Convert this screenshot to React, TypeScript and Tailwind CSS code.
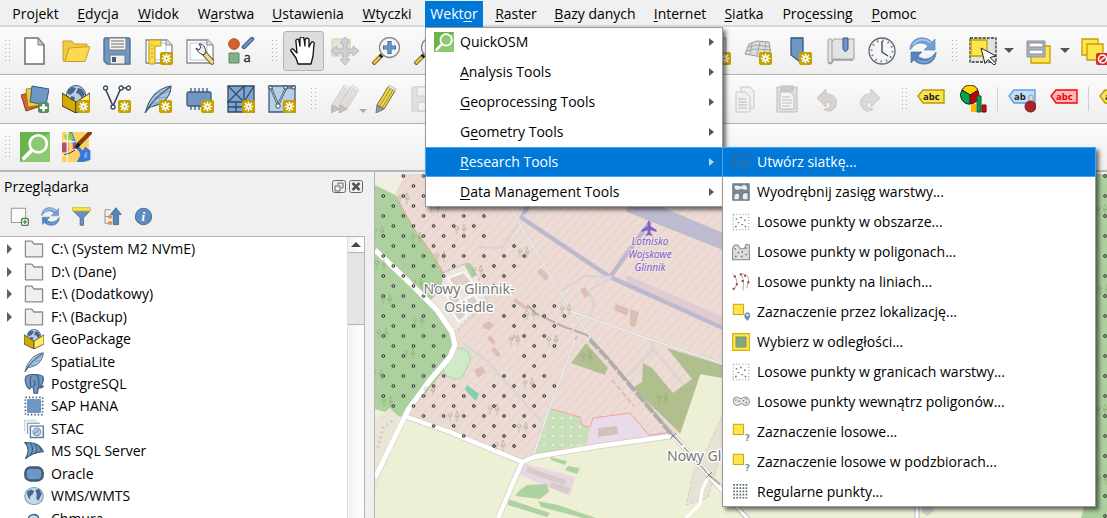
import React, { type ReactNode } from "react";

const NAVY = "#415a75";
const BLUE = "#6d97c4";

function Svg({ size = 28, children }: { size?: number; children: ReactNode }) {
  return (
    <svg width={size} height={size} viewBox="0 0 28 28" fill="none" className="block shrink-0" aria-hidden="true">
      {children}
    </svg>
  );
}

function Star({ x = 15, y = 15 }: { x?: number; y?: number }) {
  return (
    <g transform={`translate(${x} ${y})`}>
      <rect width="13" height="13" rx="2" fill="#c4a000" />
      <path d="M6.5 1.8v9.4M1.8 6.5h9.4M3 3l7 7M10 3l-7 7" stroke="#fff" strokeWidth="1.7" />
      <circle cx="6.5" cy="6.5" r="1" fill="#c4a000" />
    </g>
  );
}

function Plus() {
  return (
    <g transform="translate(17 17)">
      <rect width="11" height="11" rx="2.5" fill="#5a8c5a" />
      <path d="M5.500 2v7.500M1.800 5.700h7.500" stroke="#fff" strokeWidth="2.400" />
    </g>
  );
}

const Refresh = () => (
  <>
    <path d="M1 13C1 4 8 0 15 1c4 .5 6 2 8 4l3-3v11H15l4-4C14 4 6 5 1 13z" fill="#6f9fd4" stroke="#5b86b8" strokeWidth=".7" />
    <path d="M4 8C8 2 16 1 22 6" stroke="#a9c8e8" strokeWidth="1.6" />
    <path d="M27 15c0 9-7 13-14 12-4-.5-6-2-8-4l-3 3V15h11l-4 4c5 5 13 4 18-4z" fill="#5585bf" stroke="#4b77ab" strokeWidth=".7" />
    <path d="M24 20c-4 6-11 6-15 3" stroke="#8bb3dd" strokeWidth="1.3" />
  </>
);

const Feather = ({ star = false }: { star?: boolean }) => (
  <>
    <path d="M2 26c1-6 4-11 8-16C15 5 20 2 27 1c0 6-3 12-8 16-4 3-9 4-13 5z" fill="#a9c4e2" stroke={NAVY} strokeWidth="1.1" />
    <path d="M1 28C7 17 16 9 26 2" stroke={NAVY} strokeWidth="1.500" />
    <path d="M10 17l1-5m4 0l1-5m4 1l1-4M10 19l7-2m-3-4l8-1m-4-3l7-3" stroke="#7391b1" strokeWidth=".8" />
    {star && <Star />}
  </>
);

const Box = ({ star = false }: { star?: boolean }) => (
  <>
    <circle cx="14" cy="10" r="9.5" fill="#b9cde3" stroke={NAVY} />
    <path d="M6 5l4-3 4 1-2 4-4 3-3-2zM16 3l4 1 3 5-3 4-3-4-3-1zM9 11l4 1-1 4-3-1z" fill="#45688c" />
    <path d="M0 8l14 9v11L0 21z" fill="#d4aa00" stroke="#333" />
    <path d="M28 8l-14 9v11l14-7z" fill="#ffee55" stroke="#333" />
    {star && <Star />}
  </>
);

const Pencil = ({ x = 0, fill = "#ead94a", edge = "#756b25" }: { x?: number; fill?: string; edge?: string }) => (
  <g transform={`translate(${x} 0)`}>
    <path d="M16 2l7 4-11 18-7-4z" fill={fill} stroke={edge} />
    <path d="M18.5 3.5L7.5 21.5M21 5L10 23" stroke={edge} strokeWidth=".7" />
    <path d="M16 2l1-2 7 4-1 2z" fill="#ececec" stroke="#bbb" />
    <path d="M5 20l7 4-8 4z" fill="#999" stroke="#777" />
  </g>
);

const Magnifier = ({ minus = false }: { minus?: boolean }) => (
  <>
    <path d="M10 18l-9 9" stroke="#222" strokeWidth="4" />
    <path d="M8 20l-6.5 6.5" stroke="#f2c12e" strokeWidth="3" />
    <circle cx="17.500" cy="10.500" r="10" fill="#f4f4f4" stroke="#888" strokeWidth="1.3" />
    <path d={minus ? "M11 10.500h13" : "M11 10.500h13M17.500 4v13"} stroke="#3f6a9e" strokeWidth="4.200" />
    <path d={minus ? "M12 10.500h11" : "M12 10.500h11M17.500 5v11"} stroke={BLUE} strokeWidth="2.400" />
  </>
);

const Tag = ({ fill, edge, text, color = "#222" }: { fill: string; edge: string; text: string; color?: string }) => (
  <>
    <path d="M1 11l5-6h21v13H6z" fill={fill} stroke={edge} strokeWidth="1.4" />
    <text x="6" y="15" fontSize="9.500" fontWeight="700" fontFamily="Open Sans, sans-serif" fill={color}>
      {text}
    </text>
  </>
);

const Page = () => (
  <>
    <path d="M1 3h21l5 5v18H1z" fill="#fff" stroke="#888" strokeWidth="1.300" />
    <path d="M4 6h17v17H4z" fill="#fafcff" stroke="#b7c8e4" />
    <path d="M21 2v6h6" fill="#ddd" stroke="#888" />
  </>
);

const icons: Record<string, ReactNode> = {
  newDoc: (
    <>
      <path d="M4 1h13l6 7v19H4z" fill="#fff" stroke="#6d6d6d" strokeWidth="1.5" />
      <path d="M17 1v7h6z" fill="#ccc" stroke="#777" />
    </>
  ),
  open: (
    <>
      <path d="M1 4h9l2 3h13v5H8L3 24H1z" fill="#f3c846" stroke="#c99c20" />
      <path d="M7 11l21-1.500-5 15H3z" fill="#fcd94f" stroke="#c99c20" />
    </>
  ),
  save: (
    <>
      <path d="M2 1h24l1 1v25H4l-3-3V2z" fill={BLUE} stroke="#507294" strokeWidth="1.400" />
      <path d="M6 1h17v12H6z" fill="#f6f6f6" stroke="#777" />
      <path d="M8 4h13M8 7h13M8 10h13" stroke="#999" strokeWidth="1.300" />
      <path d="M7 18h15v9H7z" fill="#eee" stroke="#777" />
      <path d="M9 20h4v5H9z" fill="#3f5f82" />
    </>
  ),
  layout: (
    <>
      <Page />
      <path d="M4 3h12v6H10v18H4z" fill="#fbdc45" stroke="#c19a1e" />
      <path d="M7 11v2m0 2v2m0 2v2m-1-13h2" stroke="#c19a1e" />
      <Star x={15} y={15} />
    </>
  ),
  layoutManager: (
    <>
      <Page />
      <path d="M18 16l8 9" stroke="#5f542c" strokeWidth="5.500" strokeLinecap="round" />
      <path d="M18 16l8 9" stroke="#ecd98c" strokeWidth="3.500" strokeLinecap="round" />
      <path d="M10 11c2 5 5 6 8 7l2-3c-1-3-1-8-7-8l2 3-2 3z" fill="#eee" stroke="#333" />
    </>
  ),
  style: (
    <>
      <circle cx="7" cy="7" r="5.300" fill="#d2622f" stroke="#ac4619" />
      <path d="M17 10l8-8" stroke="#3f6592" strokeWidth="4.500" strokeLinecap="round" />
      <path d="M17 10l8-8" stroke="#6d97c4" strokeWidth="2" strokeLinecap="round" />
      <path d="M2 16h10v10H2z" fill="#86ad86" stroke="#5c8a5c" />
      <text x="16.500" y="25" fontSize="13" fontFamily="Open Sans, sans-serif" fill="#222" stroke="#222" strokeWidth=".3">
        a
      </text>
    </>
  ),
  hand: (
    <path
      d="M8 27l-2-6-5-7c-1-2 2-3 3-1l3 3L6 5c-1-3 3-4 3-1l1 5V2c0-3 4-3 4 0l1 7V3c1-3 4-2 4 0v7l2-4c1-2 4-1 3 1l-1 12-2 8z"
      fill="#fff"
      stroke="#111"
      strokeWidth="1.300"
      strokeLinejoin="round"
    />
  ),
  pan: (
    <>
      <path d="M1 2h18v17H1z" fill="#e7e2d5" stroke="#d3cdb9" />
      <path d="M14 0l5 6h-3v6h6V9l6 5-6 5v-3h-6v6h3l-5 6-5-6h3v-6H6v3l-6-5 6-5v3h6V6H9z" fill="#ced2d7" stroke="#b1b6bc" />
    </>
  ),
  zoomIn: <Magnifier />,
  zoomOut: <Magnifier minus />,
  mesh: (
    <>
      <path d="M1 17L5 7l8-3 12 1 2 13-9 2z" fill="#ddd" stroke="#999" />
      <path d="M2 14l9-2 16 1M4 10l10-2 12 2M8 6L6 17M16 5l-3 13M22 5l-2 13" stroke="#999" strokeWidth=".8" />
      <Star x={15} />
    </>
  ),
  map3d: (
    <>
      <path d="M3 1h20v26H3z" fill="#ddd" stroke="#999" />
      <Star x={15} />
    </>
  ),
  bookmark: (
    <>
      <path d="M6 1h12v26l-4-3-8-6z" fill={BLUE} stroke="#36577c" strokeWidth="1.300" />
      <Star x={14} />
    </>
  ),
  book: (
    <>
      <path d="M1 4c0-3 4-3 4 0v18h22V2H7L5 5v21c-3 2-4 0-4-2z" fill="#e3e3e3" stroke="#aaa" strokeWidth="1.200" />
      <path d="M2 25c1 2 4 1 4-2h20" stroke="#999" strokeWidth="1.300" />
      <path d="M16 1h5v11l-2.500 3-2.500-3z" fill={BLUE} stroke="#36577c" />
    </>
  ),
  clock: (
    <>
      <circle cx="14" cy="14" r="13" fill="#f5f5f5" stroke="#666" strokeWidth="1.300" />
      <circle cx="14" cy="14" r="10.500" stroke="#5484bd" strokeWidth="2" strokeDasharray="1.500 4" />
      <path d="M14 4v11l6 4" stroke="#555" strokeWidth="1.500" />
    </>
  ),
  refresh: <Refresh />,
  select: (
    <>
      <path d="M1 1h26v24H1z" fill="#e2e2e2" stroke="#333" strokeWidth="1.300" strokeDasharray="3 1.200" />
      <path d="M2 3h16v16H2z" fill="#fde64b" stroke="#c4a000" strokeWidth="1.300" />
      <path d="M12 11l15 8-6 1.500 6 6-2 1.500-6-5.500-3 4z" fill="#fff" stroke="#222" />
    </>
  ),
  form: (
    <>
      <path d="M6 9h19v17H6z" fill="#fde64b" stroke="#c4a000" strokeWidth="1.300" />
      <path d="M2 4h18v16H2z" fill="#aeb5bb" stroke="#8c949b" />
      <path d="M4 6h14v4H4zM4 13h14v4H4z" fill="#fff" stroke="#858e96" />
    </>
  ),
  deselect: (
    <>
      <path d="M1 2h16v16H1z" fill="#fde64b" stroke="#c4a000" strokeWidth="1.300" />
      <path d="M6 7h16v16H6z" fill="#fde64b" stroke="#c4a000" strokeWidth="1.300" />
      <rect x="15" y="16" width="13" height="12" rx="2" fill="#d32f2f" />
      <circle cx="21.500" cy="22" r="4" stroke="#fff" strokeWidth="1.500" />
      <path d="M18 25l7-6" stroke="#fff" strokeWidth="1.500" />
    </>
  ),
  layers: (
    <>
      <path d="M0 10l11-3 6 15-12 4z" fill="#cf6233" stroke="#92401c" />
      <path d="M5 4l14-1 1 17-13 2z" fill="#f2cd3d" stroke="#a98315" />
      <path d="M11 1l17 3-3 16-16-3z" fill={BLUE} stroke="#36577c" />
      <Plus />
    </>
  ),
  geopackage: <Box star />,
  shape: (
    <>
      <path d="M2 3l8 18L18 3h8" stroke="#34495e" strokeWidth="1.600" />
      <g fill="#fff" stroke="#34495e" strokeWidth="1.300">
        <circle cx="2.500" cy="3" r="2" />
        <circle cx="10" cy="22" r="2" />
        <circle cx="18" cy="3" r="2" />
        <circle cx="25.500" cy="3" r="2" />
      </g>
      <Star />
    </>
  ),
  spatialite: <Feather star />,
  memory: (
    <>
      <path d="M5 3v22M9 3v22M13 3v22M17 3v22M21 3v22" stroke={NAVY} strokeWidth="1.300" />
      <rect x="1" y="7" width="24" height="14" rx="1.500" fill={BLUE} stroke={NAVY} strokeWidth="1.300" />
      <Star />
    </>
  ),
  meshLayer: (
    <>
      <path d="M1 1h26v26H1z" fill="#7fa5cf" stroke="#2f4966" strokeWidth="1.300" />
      <path d="M1 1l16 16V1L1 17h26M17 17L27 1M9 17v10M1 22h16v5" stroke="#2f4966" strokeWidth="1.300" />
      <Star />
    </>
  ),
  virtual: (
    <>
      <path d="M1 1h26v26H1z" fill="#b9cfe7" stroke={NAVY} strokeWidth="1.300" />
      <path d="M3 3l7 17L18 3h7" stroke="#34495e" strokeWidth="2.200" />
      <path d="M3 3l7 17L18 3h7" stroke="#d7e4f2" strokeWidth=".8" />
      <circle cx="10" cy="21" r="2.200" fill="#fff" stroke="#34495e" />
      <path d="M1 1h3v3H1zM16 1h3v3h-3zM24 1h3v3h-3z" fill="#fff" stroke="#34495e" />
      <Star />
    </>
  ),
  pencils: (
    <g opacity=".5">
      <Pencil x={-4} fill="#d5cfcb" edge="#aaa5a1" />
      <Pencil x={4} fill="#d5cfcb" edge="#aaa5a1" />
    </g>
  ),
  pencil: <Pencil x={1} />,
  saveOff: (
    <g opacity=".7">
      <path d="M1 2h26v24H1z" fill="#d8d8d8" stroke="#bbb" />
      <path d="M6 2h16v9H6zM7 17h15v9H7z" fill="#f2f2f2" stroke="#bbb" />
    </g>
  ),
  copy: (
    <g fill="#f0f0f0" stroke="#c8c8c8">
      <path d="M9 2h9l4 4v17H9z" />
      <path d="M4 7h9l5 5v15H4z" />
      <path d="M6 14h8m-8 3h9m-9 3h9m-9 3h9" stroke="#bbb" />
    </g>
  ),
  paste: (
    <g fill="#e0e0e0" stroke="#bcbcbc">
      <path d="M4 2h20v25H4z" />
      <path d="M8 1h12v5H8z" fill="#ccc" />
      <path d="M7 7h10l4 4v13H7z" fill="#f4f4f4" />
      <path d="M9 12h8m-8 3h10m-10 3h10m-10 3h8" />
    </g>
  ),
  undo: <path d="M3 13l9-9v5c12-1 14 14 4 17-3 0-6-1-6-2 8 0 8-7 2-7v5z" fill="#d9d2cf" stroke="#c9c1be" />,
  redo: <path d="M25 13l-9-9v5C4 8 2 23 12 26c3 0 6-1 6-2-8 0-8-7-2-7v5z" fill="#d7dbd8" stroke="#c6cac7" />,
  tagYellow: <Tag fill="#f9e44c" edge="#b89b17" text="abc" />,
  tagRed: <Tag fill="#ffb8b8" edge="#f00" text="abc" color="#e00000" />,
  tagPin: (
    <>
      <Tag fill="#c3ddf8" edge="#5ba0e6" text="ab" />
      <rect x="21" y="10" width="4" height="10" rx="2" fill="#ddd" stroke="#999" />
      <circle cx="22.500" cy="21.500" r="5.500" fill="#a3262b" stroke="#801b20" />
    </>
  ),
  diagram: (
    <>
      <circle cx="11" cy="10" r="9" fill="#c00000" stroke="#222" />
      <path d="M11 10L3 5a9 9 0 0 1 16 0z" fill="#ffd300" stroke="#222" />
      <path d="M11 10v9A9 9 0 0 1 3 5z" fill="#00a651" stroke="#222" />
      <path d="M12 19h5v8h-5z" fill="#ffb400" />
      <path d="M18 11h4v16h-4z" fill="#0d9a4e" stroke="#04602d" />
      <path d="M23 20h4v7h-4z" fill="#c21313" stroke="#700" />
    </>
  ),
  quickosm: (
    <>
      <path d="M0 0h28v28H0z" fill="#6db34c" />
      <path d="M0 28L28 0v28z" fill="#8cc970" />
      <path d="M12 16l-8.500 8.500" stroke="#fff" strokeWidth="3.500" strokeLinecap="round" />
      <circle cx="17" cy="11" r="8" fill="#8cc970" stroke="#fff" strokeWidth="2.500" />
    </>
  ),
  osmMap: (
    <>
      <path d="M0 0h25v28H0z" fill="#fbd264" />
      <path d="M8 0l4 12 6 6 2 10M22 16l3 2v7l-9 2z" stroke="#3b77d9" strokeWidth="3" fill="#7aa8e8" />
      <path d="M0 10h6v9H0zM10 12h4v4h-4z" fill="#ad4f78" />
      <path d="M2 3l7-2 2 6-7 1z" fill="#8ccf5a" />
      <path d="M0 8l12 1M5 0v28M0 22l14-6" stroke="#f5f1e5" strokeWidth="1.400" />
      <path d="M15 12L26 1" stroke="#8a3a16" strokeWidth="4" strokeLinecap="round" />
      <path d="M13 15l3-4" stroke="#222" strokeWidth="3" />
      <path d="M12 17c-3 1-5 4-10 4" stroke="#333" />
    </>
  ),
  folder: <path d="M2 3h9l3 4h12v18H2z" fill="#efefef" stroke="#8c8c8c" strokeWidth="1.800" strokeLinejoin="round" />,
  box: <Box />,
  feather: <Feather />,
  postgres: (
    <g fill={BLUE} stroke={NAVY} strokeWidth="1.600">
      <path d="M3 3c4-3 18-3 23 0 3 5-1 12-3 14h4c-1 3-6 3-7 2l-1 8h-5l-1-8-3-1-2 3C3 19 0 8 3 3z" />
      <path d="M10 3c-3 4 0 9-1 14m9-15c4 4 2 11 3 16m-8-1c2-1 4-3 1-8" fill="none" />
    </g>
  ),
  hana: (
    <>
      <path d="M2 2h24v24H2z" stroke={NAVY} strokeWidth="2.400" strokeDasharray="2 2.800" />
      <path d="M5 5h18v18H5z" fill={BLUE} stroke="#507cab" />
    </>
  ),
  stac: (
    <>
      <path d="M1 17V2h17" stroke="#cad8e8" strokeWidth="2" />
      <path d="M5 21V6h17" stroke="#8fa9c4" strokeWidth="2" />
      <path d="M9 10h18v16H9z" fill="#fff" stroke="#5c7c9c" strokeWidth="2" />
      <circle cx="18" cy="18" r="5.500" fill="#b8cde4" stroke={BLUE} strokeWidth="1.500" />
      <path d="M14 21l7-6" stroke={NAVY} />
    </>
  ),
  mssql: (
    <g fill={BLUE} stroke={NAVY} strokeWidth="1.500">
      <path d="M1 2c10 0 21 1 26 13-8 0-17 3-25 10 5-9 6-16-1-23z" />
      <path d="M9 3c4 5 4 12 0 16M15 4c4 5 4 10 1 14M21 7c2 3 3 6 1 9" fill="none" />
    </g>
  ),
  oracle: <rect x="2" y="5" width="24" height="18" rx="7" fill={BLUE} stroke="#3f5a77" strokeWidth="3.500" />,
  globe: (
    <>
      <ellipse cx="14" cy="14" rx="13" ry="12" fill="#c6d8eb" stroke="#7c9bbb" strokeWidth="1.500" />
      <path d="M4 8l6-3 4 2-2 5-3 2-1 5-3-5zM16 6l5-2 4 7-3 6-2 4-3-4 1-5z" fill="#45688c" />
    </>
  ),
  cloud: <path d="M5 24c-5 0-5-8 1-9 0-9 13-10 15-1 7 0 7 10 1 10z" fill="#c6d8eb" stroke={NAVY} strokeWidth="1.800" />,
  addLayer: (
    <>
      <path d="M2 2h21v21H2z" fill="#fafafa" stroke="#999" strokeWidth="1.500" />
      <rect x="17" y="17" width="10" height="10" rx="2" fill="#fff" stroke="#4d844d" strokeWidth="2" />
      <path d="M22 19v6m-3-3h6" stroke="#4d844d" strokeWidth="2" />
    </>
  ),
  filter: (
    <>
      <path d="M1 5h26L17 16v11h-5V16z" fill="#6491c2" stroke={NAVY} />
      <path d="M1 1h26v5H1z" fill="#fde64b" stroke="#c4a000" />
    </>
  ),
  collapse: (
    <>
      <path d="M3 4v20h6M3 4h8M3 14h6" stroke="#999" strokeWidth="1.500" />
      <path d="M8 12h5v5H8zM8 21h5v5H8z" fill="#ef8b35" />
      <path d="M19 1l8 10h-4v15h-8V11h-4z" fill="#5684b7" stroke="#36577c" />
    </>
  ),
  info: (
    <>
      <circle cx="14" cy="14" r="12" fill="#5c8dc2" stroke="#46719f" strokeWidth="1.500" />
      <text x="11" y="21" fontSize="19" fontStyle="italic" fontWeight="700" fontFamily="Liberation Serif, serif" fill="#fff">
        i
      </text>
    </>
  ),
  grid: <path d="M1 5h26M1 14h26M1 23h26M5 1v26M14 1v26M23 1v26" stroke="#3d6b92" strokeWidth="1.400" />,
  extent: (
    <>
      <path d="M1 1h26v26H1z" fill="#72899d" stroke="#576b7c" />
      <path d="M3 6c1-5 8-2 11-1 5-5 11-1 10 4-3 5-8 0-11 1-4 2-10 2-10-4zM3 20c3-7 9-4 9 0l-1 6H3zM17 26c-3-8 1-13 8-10v10z" fill="#eee" stroke="#59636c" />
    </>
  ),
  randomBox: (
    <>
      <path d="M2 2h24v24H2z" stroke="#999" strokeWidth="1.700" strokeDasharray="1.700 3" />
      <path d="M7 8v2M14 6v2M20 10v2M10 14v2M16 17v2M6 20v2M21 20v2" stroke="#4a8057" strokeWidth="2.400" />
    </>
  ),
  randomPoly: (
    <>
      <path d="M1 26V8l3-5h5l4 6h6l3-7 5 1v23z" fill="#ddd" stroke="#888" strokeWidth="1.600" />
      <path d="M5 8v2M22 7v2M10 14v2M16 13v2M6 20v2M15 20v2M22 17v2" stroke="#4a8057" strokeWidth="2.400" />
    </>
  ),
  randomLines: (
    <>
      <path d="M1 2c6 5 10 13 2 24M13 1c6 7 5 16 4 26M13 1c9 0 12 4 13 9l-3 14" stroke="#8c9994" strokeWidth="1.300" />
      <path d="M3 4h3v3H3zM6 16h3v3H6zM1 23h3v3H1zM12 1h3v3h-3zM19 3h3v3h-3zM15 11h3v3h-3zM24 13h3v3h-3z" fill="#b02b35" />
    </>
  ),
  location: (
    <>
      <path d="M2 2h16v16H2z" fill="#fde64b" stroke="#c4a000" strokeWidth="1.500" />
      <path d="M24 28c-5-6-6-8-4-11s6-3 8 0 0 5-4 11z" fill="#6f8ca3" />
      <circle cx="24" cy="19" r="1.800" fill="#fff" />
    </>
  ),
  distance: (
    <>
      <path d="M1 1h26v26H1z" fill="#fde64b" stroke="#d3b20f" strokeWidth="1.700" />
      <path d="M6 6h16v16H6z" fill="#83a67b" stroke="#76906a" />
    </>
  ),
  inside: (
    <>
      <path d="M2 12c0-8 8-6 12-3 5-4 12-4 13 3 1 9-8 9-12 4-5 5-13 5-13-4z" fill="#e3e3e3" stroke="#888" strokeWidth="1.500" />
      <path d="M6 10v2M11 12v2M18 11v2M22 14v2M22 8v2" stroke="#4a8057" strokeWidth="2" />
    </>
  ),
  question: (
    <>
      <path d="M2 2h16v16H2z" fill="#fde64b" stroke="#c4a000" strokeWidth="1.500" />
      <text x="20" y="28" fontSize="14" fontWeight="700" fontFamily="DejaVu Sans, sans-serif" fill="#7893a8">
        ?
      </text>
    </>
  ),
  regular: <path d="M2 3h24M2 8h24M2 13h24M2 18h24M2 23h24" stroke="#5c6e60" strokeWidth="2.600" strokeDasharray="2.600 2.200" />,
};

function Tool({ name, label, size = 28, active = false }: { name: string; label: string; size?: number; active?: boolean }) {
  return (
    <button
      type="button"
      aria-label={label}
      className={
        active
          ? "flex h-10 items-center justify-center rounded-[3px] border border-[#b4b4b4] bg-[#dcdcdc]"
          : "flex h-10 items-center justify-center"
      }
    >
      <Svg size={size}>{icons[name]}</Svg>
    </button>
  );
}

function Grip() {
  return (
    <svg width="6" height="22" viewBox="0 0 6 22" className="shrink-0" aria-hidden="true">
      <path d="M.5 0v22M4.500 0v22" stroke="#b0b0b0" strokeDasharray="1 3" />
    </svg>
  );
}

function Caret({ label }: { label: string }) {
  return (
    <button type="button" aria-label={label} className="flex h-10 w-4 shrink-0 items-center justify-center">
      <svg width="10" height="6" viewBox="0 0 10 6" aria-hidden="true">
        <path d="M0 0h10L5 5z" fill="#555" />
      </svg>
    </button>
  );
}

function Label({ text, mark }: { text: string; mark: number }) {
  if (mark < 0) return <span>{text}</span>;
  return (
    <span>
      {text.slice(0, mark)}
      <u className="underline decoration-1 underline-offset-2">{text[mark]}</u>
      {text.slice(mark + 1)}
    </span>
  );
}

const menus: [string, number][] = [
  ["Projekt", 3],
  ["Edycja", 0],
  ["Widok", 0],
  ["Warstwa", 1],
  ["Ustawienia", 0],
  ["Wtyczki", 0],
  ["Wektor", 4],
  ["Raster", 0],
  ["Bazy danych", 0],
  ["Internet", 0],
  ["Siatka", 0],
  ["Processing", 3],
  ["Pomoc", 0],
];

const vectorMenu: [string, number][] = [
  ["QuickOSM", -1],
  ["Analysis Tools", 0],
  ["Geoprocessing Tools", 0],
  ["Geometry Tools", 1],
  ["Research Tools", 0],
  ["Data Management Tools", 0],
];

const researchMenu: [string, string][] = [
  ["grid", "Utwórz siatkę..."],
  ["extent", "Wyodrębnij zasięg warstwy..."],
  ["randomBox", "Losowe punkty w obszarze..."],
  ["randomPoly", "Losowe punkty w poligonach..."],
  ["randomLines", "Losowe punkty na liniach..."],
  ["location", "Zaznaczenie przez lokalizację..."],
  ["distance", "Wybierz w odległości..."],
  ["randomBox", "Losowe punkty w granicach warstwy..."],
  ["inside", "Losowe punkty wewnątrz poligonów..."],
  ["question", "Zaznaczenie losowe..."],
  ["question", "Zaznaczenie losowe w podzbiorach..."],
  ["regular", "Regularne punkty..."],
];

const tree: [string, string][] = [
  ["folder", "C:\\ (System M2 NVmE)"],
  ["folder", "D:\\ (Dane)"],
  ["folder", "E:\\ (Dodatkowy)"],
  ["folder", "F:\\ (Backup)"],
  ["box", "GeoPackage"],
  ["feather", "SpatiaLite"],
  ["postgres", "PostgreSQL"],
  ["hana", "SAP HANA"],
  ["stac", "STAC"],
  ["mssql", "MS SQL Server"],
  ["oracle", "Oracle"],
  ["globe", "WMS/WMTS"],
  ["cloud", "Chmura"],
];

const fileTools: [string, string][] = [
  ["newDoc", "Nowy"],
  ["open", "Otwórz"],
  ["save", "Zapisz"],
  ["layout", "Nowy wydruk"],
  ["layoutManager", "Menedżer wydruków"],
  ["style", "Menedżer stylów"],
];

const viewTools: [string, string][] = [
  ["hand", "Przesuń"],
  ["pan", "Przesuń do zaznaczenia"],
  ["zoomIn", "Powiększ"],
  ["zoomOut", "Pomniejsz"],
  ["zoomIn", "Pełny zasięg"],
  ["zoomIn", "Powiększ do zaznaczenia"],
  ["zoomIn", "Powiększ do warstwy"],
  ["zoomIn", "Rozdzielczość natywna"],
  ["zoomOut", "Poprzedni widok"],
  ["zoomIn", "Następny widok"],
  ["map3d", "Nowy widok mapy"],
  ["mesh", "Nowy widok 3D"],
  ["bookmark", "Nowa zakładka"],
  ["book", "Zakładki"],
  ["clock", "Kontroler czasu"],
  ["refresh", "Odśwież"],
];

const layerTools: [string, string][] = [
  ["layers", "Dodaj warstwę"],
  ["geopackage", "Nowa GeoPackage"],
  ["shape", "Nowa Shapefile"],
  ["spatialite", "Nowa SpatiaLite"],
  ["memory", "Nowa tymczasowa"],
  ["meshLayer", "Nowa siatka"],
  ["virtual", "Nowa wirtualna"],
];

/* Sample points: row ordinate followed by the occupied half-pitch columns. */
const points: [number, number[]][] = [
  [176, [2, 4]],
  [186, [3]],
  [196, [0, 2, 4]],
  [206, [1, 3]],
  [216, [0, 2, 4, 6, 8, 10]],
  [226, [1, 3, 5, 7, 9]],
  [236, [0, 2, 4, 6, 8, 10]],
  [246, [1, 3, 5, 7, 13]],
  [256, [0, 2, 4, 6, 8, 10, 12, 14]],
  [266, [1, 3, 5, 7, 11, 13]],
  [276, [0, 2, 4, 6, 10, 12]],
  [286, [1, 3, 5, 11]],
  [296, [0, 2, 4]],
  [306, [1, 3, 13, 15, 17]],
  [316, [0, 2, 4, 12, 14, 16, 18]],
  [326, [1, 3, 5, 13, 15, 17]],
  [336, [0, 2, 4, 6, 14, 16]],
  [346, [1, 3, 5, 15, 17]],
  [356, [0, 2, 4, 6, 14, 16]],
  [366, [1, 3, 5, 15]],
  [376, [0, 2, 4, 6, 12, 14, 16]],
  [386, [1, 3, 5, 7, 11, 13, 15, 17]],
  [396, [0, 2, 4, 6, 8, 10, 12, 14, 16]],
  [406, [1, 3, 5, 7, 9, 11, 13, 15]],
  [416, [4, 6, 8, 10, 12, 14]],
  [426, [5, 7, 9, 11, 13, 15]],
  [436, [8, 10, 12, 14]],
  [446, [11, 13]],
];

const trees: [number, number][] = [
  [403, 199], [434, 208], [378, 232], [416, 238], [460, 230], [440, 257], [380, 265], [523, 253], [477, 271], [417, 284],
  [386, 300], [565, 310], [530, 315], [418, 322], [382, 334], [552, 341], [409, 354], [514, 341], [377, 375], [429, 391],
  [528, 384], [387, 402], [453, 417], [493, 410], [522, 428], [499, 446], [586, 357], [662, 399], [1101, 210], [1103, 290],
  [1101, 410], [1102, 480],
];

function MapCanvas() {
  return (
    <svg
      viewBox="375 174 732 344"
      preserveAspectRatio="xMinYMin slice"
      className="absolute inset-0 h-full w-full"
      role="img"
      aria-label="Mapa"
    >
      <defs>
        <pattern id="hatch" width="7" height="7" patternUnits="userSpaceOnUse" patternTransform="rotate(-48)">
          <rect width="7" height="7" fill="#ecdcd5" />
          <path d="M0 3h7" stroke="#ebcfc9" strokeWidth="1.100" />
        </pattern>
        <pattern id="orchard" width="9" height="9" patternUnits="userSpaceOnUse">
          <rect width="9" height="9" fill="#c7e0b9" />
          <path d="M3 4h2" stroke="#f1f7ec" strokeWidth="1.500" />
        </pattern>
      </defs>
      <rect x="375" y="174" width="732" height="344" fill="#edf0d5" />
      <path d="M405 174h317v191l-22 9-20 59-8 3-137 21-13 5-115-45-30-90V195z" fill="url(#hatch)" />
      <path d="M375 174h30l-10 21-20-10z" fill="#f1eee2" />
      <path d="M375 185l20 10 18 32 20 28 12 20-10 35 18 15 4 30-52 63-30-9z" fill="#acd19e" />
      <path d="M455 333l2 22-6 20-36 42 36 14 8-90z" fill="url(#hatch)" />
      <path d="M395 195l18 32 20 28 10 18 25-10 8 14" stroke="#e6a59a" fill="none" />
      <path d="M443 273l24-10 11 14 10 27-17 12-16 16-14-16-12-14 12-14z" fill="#ece6df" stroke="#c9acd0" strokeDasharray="3 2" />
      <path d="M464 264l6-1 7 12-5 3z" fill="#acd19e" />
      <path d="M448 278l16-6 8 10-17 8zM447 296l9-4 5 9-9 5zM465 299l9-4 5 7-9 5zM451 310l8-4 8 9-8 7z" fill="#ded1ca" stroke="#faf9f6" strokeWidth="2" />
      <g fill="#dcbeb6">
        <path d="M537 272l4-4 8 8-3 5zM616 304l13 5-2 7-13-6zM630 309l9 3-4 15-5-1zM580 290l5-3 5 8-5 3zM483 324l6-3 5 4-4 5-7-2zM490 335l6 7-3 3-6-7zM474 370l8-4 4 6-8 6zM491 350l4-3 6 8-4 2zM510 340l4-6 4 4zM515 298l14 10-2 3-14-10z" />
        <path d="M612 380l22 26M577 336l-9 23" stroke="#dcbeb6" strokeWidth="2" strokeDasharray="5 3" fill="none" />
      </g>
      <path d="M627 205h30l66 28v17l-96-38z" fill="#bdbbd0" />
      <path d="M627 275l96 42v8l-98-43z" fill="#dfcbd1" />
      <path d="M528 205l-6 13 88 59 113 51M650 222l-40 55" fill="none" stroke="#bcb9ce" strokeWidth="4.500" />
      <path d="M523 216l50-12 25 3" fill="none" stroke="#dfd9dd" strokeWidth="2" />
      <path d="M643 363l-1 19-9 6 47 45 20-59 22 4v-13l-55-17 25 31-19 14-21-25z" fill="#afbf8e" />
      <path d="M586 343l22 25-3 7-34-12z" fill="#b2bf90" />
      <path d="M548 408l32 9 2 8 8 2-3 16-55 14z" fill="url(#orchard)" />
      <path d="M593 418l37-5 19 22-62 9z" fill="#eadbea" />
      <path d="M548 408l32 9 2 8 8 2 3-9 37-5 19 22 24-3" fill="none" stroke="#efa2a0" />
      <path d="M598 428l19-2 1 8-20 3z" fill="#cfc1bc" />
      <path d="M700 374l-20 59" stroke="#c8b99a" />
      <rect x="446" y="348" width="22" height="31" rx="9" transform="rotate(24 457 363)" fill="#d0e9c6" stroke="#b2deb6" strokeWidth="1.500" />
      <path d="M467 385l12 9-3 7-11-11z" fill="#84cfad" />
      <path d="M433 378l6-2-4 7-6 1z" fill="#acd19e" />
      <path d="M523 463l52 14-5 19-50-21z" fill="#e9d6e4" />
      <path d="M527 467l40 13-3 5-38-13zM552 482l18 6-2 6-19-7z" fill="#d6cbc9" />
      <path d="M550 457l17 4-2 4-14-5zM568 466l12 2-3 6-12-4zM527 485l20-1 2 8-9 7-25-3 5-6zM508 499l42 14-3 4-39-12zM538 501l20 4 38 13h-13l-42-11z" fill="#aed2a0" />
      <g fill="none" stroke="#dad5d4" strokeWidth="2.500">
        <path d="M510 205l9 18 38 64 16 25 22 32M519 223l-17 25-25-1M573 312l17 6 62 22 71 24M612 277l-27-1-24 15M612 277l-23 14 5 12-4 15M463 343l24 18 55 61M575 340l-27 72-15 45M652 340l1 10-25 25M653 349l30 35" />
      </g>
      <path d="M510 205l9 18 38 64 16 25 22 32M573 312l17 6 62 22 71 24M575 340l-27 72-15 45" fill="none" stroke="#f7f5f3" />
      <path d="M375 420l15-12 9 9-24 75z" fill="#e9e6d8" />
      <path d="M378 448l5-20 9-7M377 478l13-26" stroke="#d6cec6" strokeWidth="3" strokeDasharray="2 3" fill="none" />
      <path d="M708 447l14-31v35l-14 47-22 7 8-35z" fill="#e8e2d6" stroke="#d4cfc7" strokeDasharray="4 2" />
      <g fill="none" stroke="#d2cec7" strokeLinejoin="round">
        <path d="M375 250l35 33 27 27 15 22 3 13-5 12-20 23-22 30-33 68" strokeWidth="6" />
        <path d="M407 417l43 15 72 30 12-5 66-11 72-10M522 462l-24 56M673 435l36 40 14 16" strokeWidth="6" />
      </g>
      <g fill="none" stroke="#fff" strokeLinejoin="round">
        <path d="M375 250l35 33 27 27 15 22 3 13-5 12-20 23-22 30-33 68" strokeWidth="5" />
        <path d="M407 417l43 15 72 30 12-5 66-11 72-10M522 462l-24 56M673 435l36 40 14 16" strokeWidth="4.500" />
        <path d="M709 475l-7 15-2 14-14 14" strokeWidth="3" />
      </g>
      <path d="M527 305l8 8 27 13 25 9 20 22 66 78 36 40 14 12" fill="none" stroke="#b4b0ae" strokeWidth="2" strokeDasharray="16 2" />
      <path d="M590 340l17 18 66 78" fill="none" stroke="#b0adab" strokeWidth="4" strokeDasharray="12 2" />
      <path d="M670 433l6 6m0-6l-6 6M706 472l6 6m0-6l-6 6" stroke="#888" />
      <path d="M1095 174h12v344h-26l14-52z" fill="#acd19e" />
      <path d="M734 504l14 15M917 504v15" stroke="#bbb" strokeWidth="5" />
      <path d="M734 504l14 15M917 504v15" stroke="#fff" strokeWidth="3" />
      <path d="M922 507h11v5l-6 4-5-4z" fill="#d7cbd4" />
      <g fill="none" stroke="#819d60" strokeOpacity=".4">
        {trees.map(([x, y]) => (
          <path key={`${x}-${y}`} d={`M${x - 3} ${y + 5}v-6m-2 0a2 3 0 1 1 4 0zM${x + 4} ${y + 5}v-7m-2 2l2-6 2 6z`} />
        ))}
      </g>
      <g fill="#bbb" stroke="#2a2a2a" strokeWidth=".9">
        {points.map(([y, columns]) =>
          columns.map((n) => <circle key={`${y}-${n}`} cx={383.3 + n * 10.06} cy={y} r="1.400" />),
        )}
        {[176, 196, 216, 236, 256, 276, 296, 316, 336, 356, 376, 396, 416, 436, 456, 476, 496, 516].map((y) => (
          <circle key={y} cx="1105" cy={y} r="1.400" />
        ))}
      </g>
      <path d="M649 220l1.500 3v3l6 4v2l-6-2v3l2 2v1l-3.500-1-3.500 1v-1l2-2v-3l-6 2v-2l6-4v-3z" fill="#8461c4" />
      <g
        fontFamily="Noto Sans, sans-serif"
        fontSize="10"
        fontStyle="italic"
        fill="#8461c4"
        stroke="#efe3e4"
        strokeWidth="2"
        paintOrder="stroke"
        textAnchor="middle"
      >
        <text x="650" y="245">Lotnisko</text>
        <text x="650" y="258">Wojskowe</text>
        <text x="650" y="271">Glinnik</text>
      </g>
      <g fontFamily="Noto Sans, sans-serif" fontSize="14" fill="#777" stroke="#fff" strokeWidth="2.500" paintOrder="stroke" textAnchor="middle">
        <text x="469" y="294">Nowy Glinnik-</text>
        <text x="469" y="312">Osiedle</text>
        <text x="667" y="461" textAnchor="start">Nowy Glinnik</text>
      </g>
    </svg>
  );
}

export default function App() {
  return (
    <div className="relative flex h-screen flex-col overflow-hidden bg-[#f0f0f0] font-['Open_Sans','Noto_Sans',sans-serif] text-sm text-black">
      <nav
        aria-label="Menu"
        className="grid h-[27px] shrink-0 grid-cols-[65px_60px_61px_74px_90px_68px_66px_58px_100px_70px_58px_89px_64px] justify-items-center border-b-2 border-[#dadada] bg-[#f0f0f0] pt-px pl-[3px]"
      >
        {menus.map(([text, mark]) => (
          <button
            key={text}
            type="button"
            className={text === "Wektor" ? "h-[26px] bg-[#0078d7] px-[5px] whitespace-nowrap text-white" : "h-[26px] px-[5px] whitespace-nowrap"}
          >
            <Label text={text} mark={mark} />
          </button>
        ))}
      </nav>

      <div className="flex h-12 shrink-0 items-center overflow-hidden border-b border-[#b4b4b4] bg-linear-to-b from-[#fbfbfb] to-[#eeeeee] pl-[5px]">
        <Grip />
        <div className="ml-[3px] grid w-[248px] shrink-0 grid-cols-6">
          {fileTools.map(([name, label]) => (
            <Tool key={label} name={name} label={label} />
          ))}
        </div>
        <div className="flex w-[21px] shrink-0 justify-center pl-1">
          <Grip />
        </div>
        <div className="grid w-[661px] shrink-0 grid-cols-[repeat(16,1fr)]">
          {viewTools.map(([name, label]) => (
            <Tool key={label} name={name} label={label} active={name === "hand"} />
          ))}
        </div>
        <div className="mr-[11px] ml-2 shrink-0">
          <Grip />
        </div>
        <Tool name="select" label="Zaznacz obiekty" />
        <span className="ml-1 flex items-center gap-2">
          <Caret label="Opcje zaznaczania" />
          <Tool name="form" label="Zaznacz według wartości" />
        </span>
        <span className="ml-1 flex items-center gap-2">
          <Caret label="Opcje formularza" />
          <Tool name="deselect" label="Usuń zaznaczenie" />
        </span>
      </div>

      <div className="flex h-[49px] shrink-0 items-center overflow-hidden border-b border-[#b4b4b4] bg-linear-to-b from-[#fbfbfb] to-[#eeeeee] pl-[5px]">
        <Grip />
        <div className="ml-[3px] grid w-[289px] shrink-0 grid-cols-7">
          {layerTools.map(([name, label]) => (
            <Tool key={label} name={name} label={label} />
          ))}
        </div>
        <div className="flex w-7 shrink-0 pl-2">
          <Grip />
        </div>
        <div className="flex shrink-0 items-center">
          <Tool name="pencils" label="Bieżące zmiany" />
          <svg width="8" height="5" viewBox="0 0 8 5" className="mt-6 mr-1 shrink-0" aria-hidden="true">
            <path d="M0 0h8L4 4z" fill="#aaa" />
          </svg>
          <Tool name="pencil" label="Tryb edycji" />
          <span className="ml-3">
            <Tool name="saveOff" label="Zapisz zmiany" />
          </span>
        </div>
        <div className="ml-[286px] grid w-[165px] shrink-0 grid-cols-4">
          <Tool name="copy" label="Kopiuj" />
          <Tool name="paste" label="Wklej" />
          <Tool name="undo" label="Cofnij" />
          <Tool name="redo" label="Ponów" />
        </div>
        <div className="mr-[9px] ml-3 shrink-0">
          <Grip />
        </div>
        <div className="flex shrink-0 items-center gap-[14px]">
          <Tool name="tagYellow" label="Etykiety" />
          <span className="flex items-center gap-2.5">
            <Tool name="diagram" label="Diagramy" />
            <span className="h-6 w-px bg-[#cfcfcf]" />
            <Tool name="tagPin" label="Przypnij etykiety" />
          </span>
          <span className="flex items-center gap-2.5">
            <Tool name="tagRed" label="Nieumieszczone etykiety" />
            <span className="h-6 w-px bg-[#cfcfcf]" />
            <Tool name="tagYellow" label="Pokaż etykiety" />
          </span>
        </div>
      </div>

      <div className="flex h-12 shrink-0 items-center overflow-hidden border-b-2 border-[#b8b8b8] bg-linear-to-b from-[#fbfbfb] to-[#eeeeee] pl-[5px]">
        <Grip />
        <div className="ml-[9px] flex gap-3">
          <Tool name="quickosm" label="QuickOSM" size={30} />
          <Tool name="osmMap" label="OSM" size={30} />
        </div>
      </div>

      <main className="flex min-h-0 flex-1">
        <aside className="flex w-[375px] shrink-0 flex-col border-r border-[#b4b4b4] pr-[9px]">
          <header className="flex h-[29px] shrink-0 items-center justify-between pr-0.5 pl-1">
            <h2>Przeglądarka</h2>
            <div className="flex gap-[3px]">
              <button type="button" aria-label="Odepnij panel">
                <svg width="14" height="14" viewBox="0 0 14 14" fill="none" stroke="#666" aria-hidden="true">
                  <rect x=".5" y=".5" width="13" height="12" rx="2" />
                  <path d="M6 5V3h5v5H9M3 6h5v5H3z" />
                </svg>
              </button>
              <button type="button" aria-label="Zamknij panel">
                <svg width="14" height="14" viewBox="0 0 14 14" fill="none" stroke="#666" aria-hidden="true">
                  <rect x=".5" y=".5" width="13" height="12" rx="2" />
                  <path d="M3.500 3l7 7m0-7l-7 7" stroke="#555" strokeWidth="2.500" />
                </svg>
              </button>
            </div>
          </header>
          <div className="flex h-[35px] shrink-0 items-center gap-3 pb-1 pl-[10px]">
            <Tool name="addLayer" label="Dodaj wybrane warstwy" size={19} />
            <Tool name="refresh" label="Odśwież przeglądarkę" size={19} />
            <Tool name="filter" label="Filtruj" size={19} />
            <Tool name="collapse" label="Zwiń wszystko" size={19} />
            <Tool name="info" label="Właściwości" size={19} />
          </div>
          <div className="flex min-h-0 flex-1 overflow-hidden border-t border-r border-[#b4b4b4] bg-white">
            <ul className="grid h-[293px] flex-1 auto-rows-fr pt-px">
              {tree.map(([icon, text]) => (
                <li key={text} className="flex min-h-0 items-center">
                  <span className="w-6 shrink-0 pl-[7px]">
                    {icon === "folder" && (
                      <svg width="6" height="10" viewBox="0 0 6 10" aria-hidden="true">
                        <path d="M0 0l5 5-5 5z" fill="#606060" />
                      </svg>
                    )}
                  </span>
                  <Svg size={20}>{icons[icon]}</Svg>
                  <span className="pl-[7px] whitespace-nowrap">{text}</span>
                </li>
              ))}
            </ul>
            <div className="w-[17px] shrink-0 border-l border-[#ddd] bg-linear-to-r from-[#f2f2f2] to-white">
              <div className="flex h-4 items-center justify-center border-b border-[#b4b4b4]">
                <svg width="10" height="5" viewBox="0 0 10 5" aria-hidden="true">
                  <path d="M0 5l5-5 5 5z" fill="#444" />
                </svg>
              </div>
              <div className="h-[72px] border-b border-[#b4b4b4] bg-[#e4e4e4]" />
            </div>
          </div>
        </aside>
        <section className="relative mt-0.5 min-w-0 flex-1 overflow-hidden">
          <MapCanvas />
        </section>
      </main>

      <div
        role="menu"
        aria-label="Wektor"
        className="absolute top-[27px] left-[425px] w-[298px] bg-white shadow-[3px_3px_4px_rgba(0,0,0,0.55)] inset-ring inset-ring-[#999]"
      >
        {vectorMenu.map(([text, mark]) => (
          <button
            key={text}
            type="button"
            role="menuitem"
            className={
              text === "Research Tools"
                ? "flex h-[30px] w-full items-center border border-[#42a5f5] bg-[#0078d7] px-2 text-left text-white"
                : "flex h-[30px] w-full items-center border border-transparent px-2 text-left"
            }
          >
            <span className="w-[26px] shrink-0">{text === "QuickOSM" && <Svg size={20}>{icons.quickosm}</Svg>}</span>
            <span className="flex-1 whitespace-nowrap">
              <Label text={text} mark={mark} />
            </span>
            <svg width="5" height="8" viewBox="0 0 5 8" className={text === "Research Tools" ? "text-[#b5d7f3]" : "text-[#555]"} aria-hidden="true">
              <path d="M0 0l5 4-5 4z" fill="currentColor" />
            </svg>
          </button>
        ))}
      </div>

      <div
        role="menu"
        aria-label="Research Tools"
        className="absolute top-[147px] left-[722px] w-[374px] bg-white shadow-[3px_3px_4px_rgba(0,0,0,0.55)] inset-ring inset-ring-[#999]"
      >
        {researchMenu.map(([icon, text], index) => (
          <button
            key={text}
            type="button"
            role="menuitem"
            className={
              index === 0
                ? "flex h-[30px] w-full items-center border border-[#42a5f5] bg-[#0078d7] px-[9px] text-left text-white"
                : "flex h-[30px] w-full items-center border border-transparent px-[9px] text-left"
            }
          >
            <Svg size={18}>{icons[icon]}</Svg>
            <span className="pl-[7px] whitespace-nowrap">{text}</span>
          </button>
        ))}
      </div>
    </div>
  );
}
